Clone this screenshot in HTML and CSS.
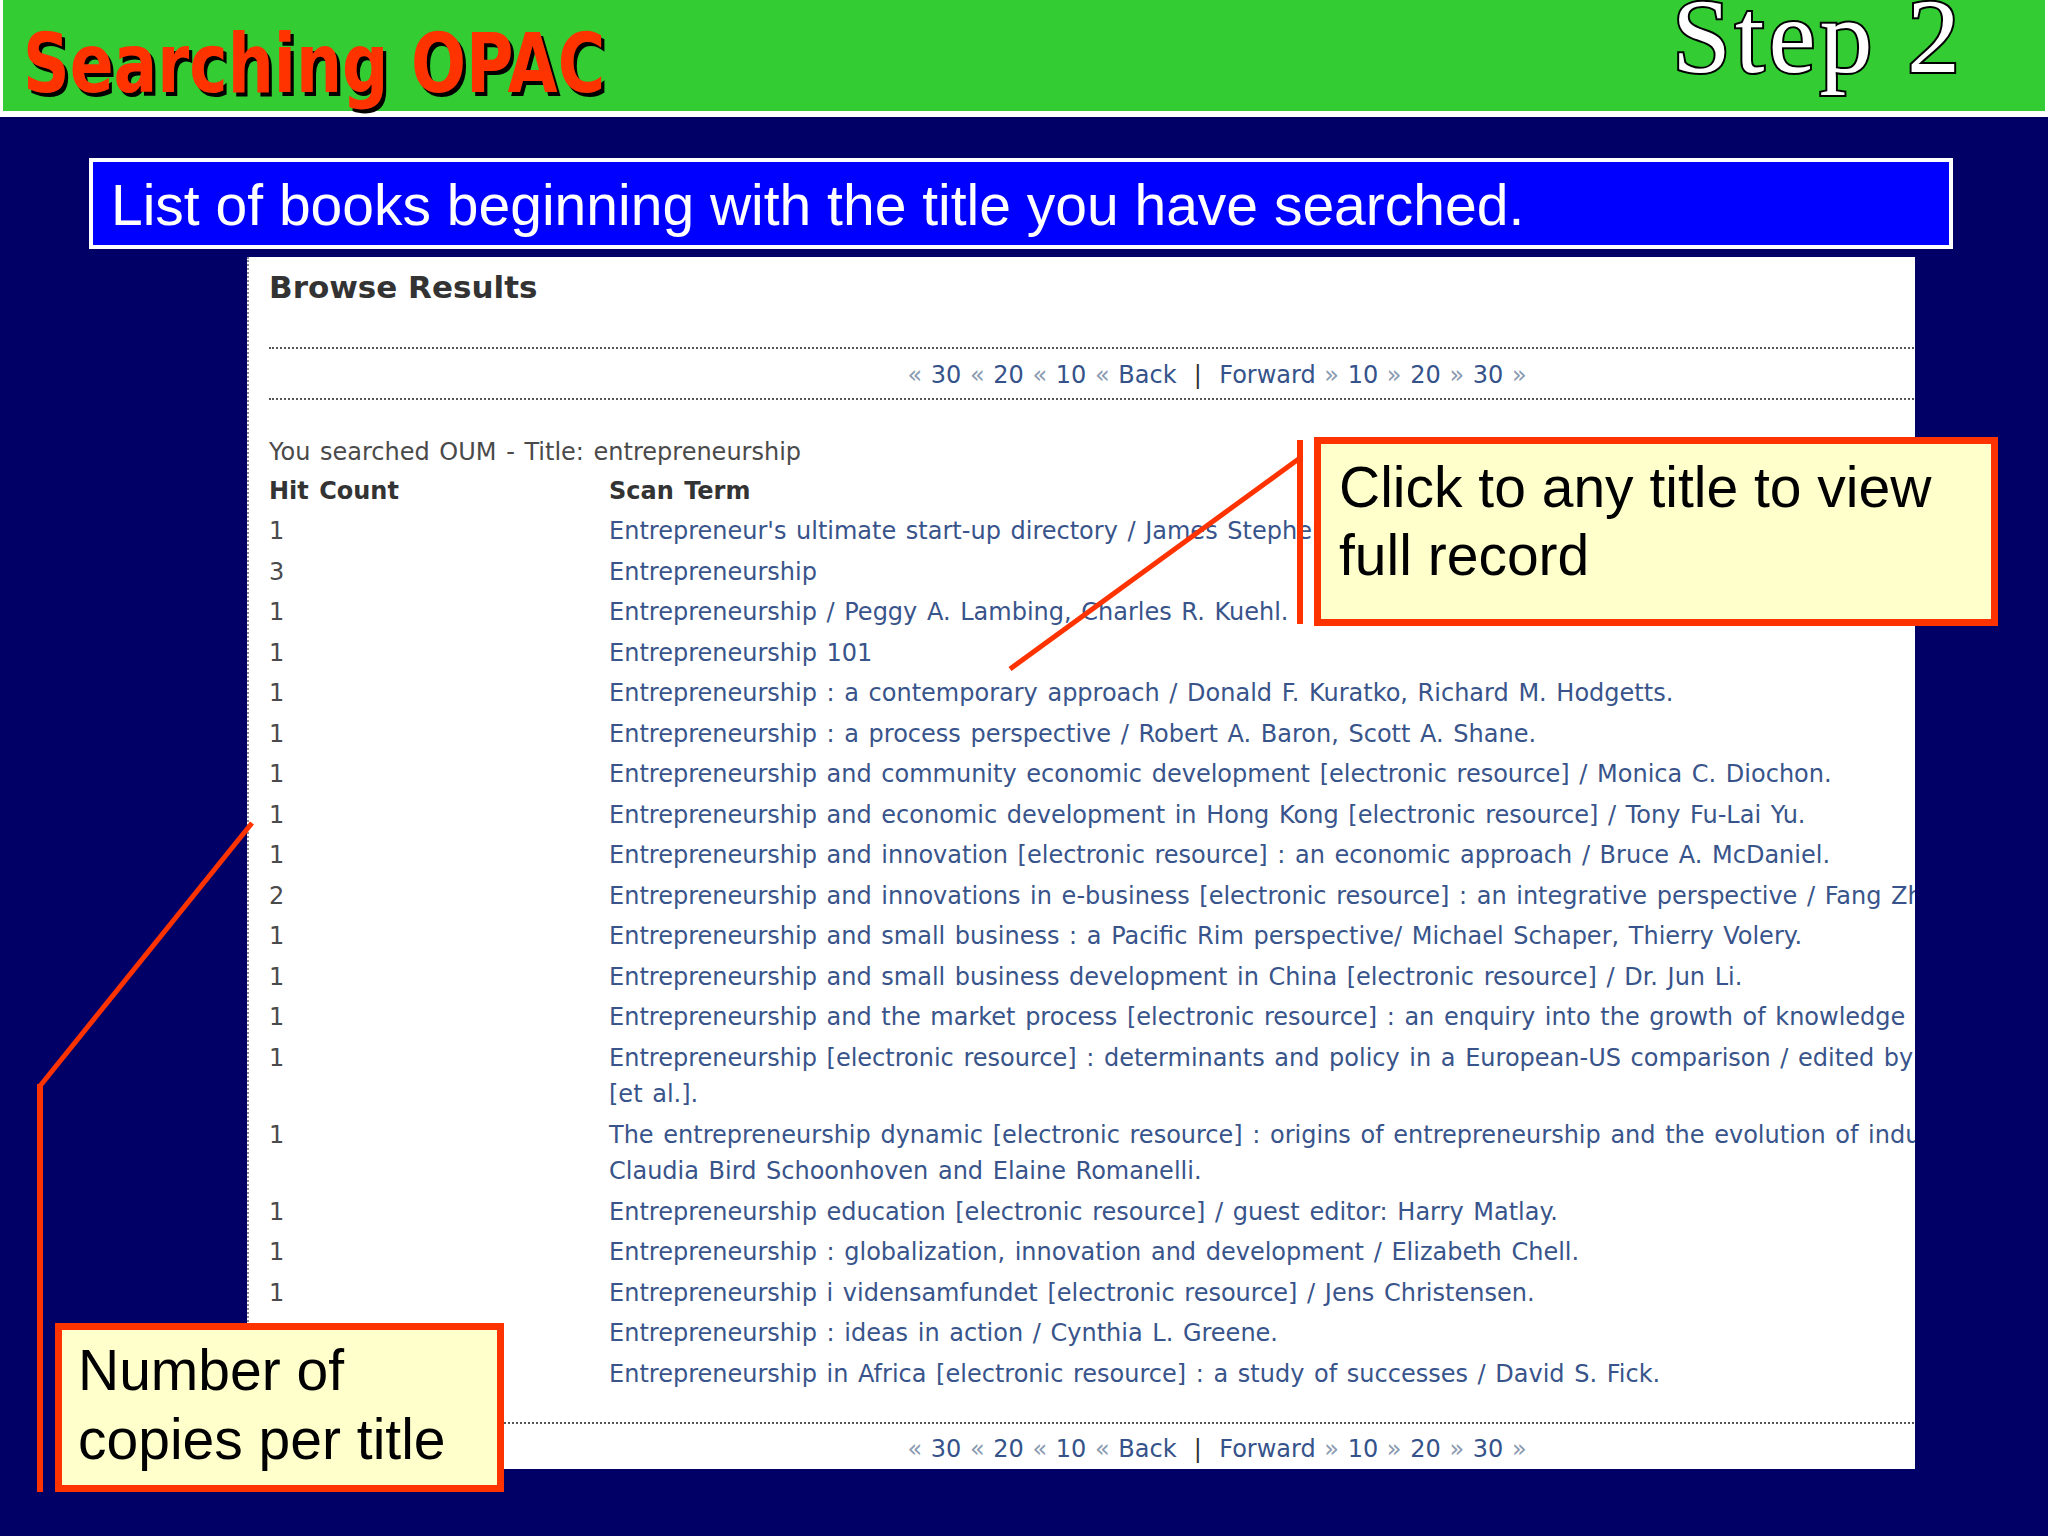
FILE: index.html
```html
<!DOCTYPE html>
<html lang="en">
<head>
<meta charset="utf-8">
<title>Searching OPAC - Step 2</title>
<link rel="stylesheet" href="styles.css">
</head>
<body>
<header class="topbar">
  <h1 class="title">Searching OPAC</h1>
  <div class="step">Step 2</div>
</header>

<div class="banner">List of books beginning with the title you have searched.</div>

<section class="panel">
  <div class="panel-inner">
    <h2 class="panel-title">Browse Results</h2>
    <div class="nav">
      <span class="ar">&laquo;</span> <a>30</a> <span class="ar">&laquo;</span> <a>20</a> <span class="ar">&laquo;</span> <a>10</a> <span class="ar">&laquo;</span> <a>Back</a>&nbsp; <span class="sep">|</span> &nbsp;<a>Forward</a> <span class="ar">&raquo;</span> <a>10</a> <span class="ar">&raquo;</span> <a>20</a> <span class="ar">&raquo;</span> <a>30</a> <span class="ar">&raquo;</span>
    </div>
    <p class="searched">You searched OUM - Title: entrepreneurship</p>
    <table class="results">
      <colgroup>
        <col class="col-hits">
        <col class="col-term">
      </colgroup>
      <thead>
        <tr><th>Hit Count</th><th>Scan Term</th></tr>
      </thead>
      <tbody>
        <tr><td>1</td><td><a>Entrepreneur's ultimate start-up directory / James Stephenson.</a></td></tr>
        <tr><td>3</td><td><a>Entrepreneurship</a></td></tr>
        <tr><td>1</td><td><a>Entrepreneurship / Peggy A. Lambing, Charles R. Kuehl.</a></td></tr>
        <tr><td>1</td><td><a>Entrepreneurship 101</a></td></tr>
        <tr><td>1</td><td><a>Entrepreneurship : a contemporary approach / Donald F. Kuratko, Richard M. Hodgetts.</a></td></tr>
        <tr><td>1</td><td><a>Entrepreneurship : a process perspective / Robert A. Baron, Scott A. Shane.</a></td></tr>
        <tr><td>1</td><td><a>Entrepreneurship and community economic development [electronic resource] / Monica C. Diochon.</a></td></tr>
        <tr><td>1</td><td><a>Entrepreneurship and economic development in Hong Kong [electronic resource] / Tony Fu-Lai Yu.</a></td></tr>
        <tr><td>1</td><td><a>Entrepreneurship and innovation [electronic resource] : an economic approach / Bruce A. McDaniel.</a></td></tr>
        <tr><td>2</td><td><a>Entrepreneurship and innovations in e-business [electronic resource] : an integrative perspective / Fang Zhao.</a></td></tr>
        <tr><td>1</td><td><a>Entrepreneurship and small business : a Pacific Rim perspective/ Michael Schaper, Thierry Volery.</a></td></tr>
        <tr><td>1</td><td><a>Entrepreneurship and small business development in China [electronic resource] / Dr. Jun Li.</a></td></tr>
        <tr><td>1</td><td><a>Entrepreneurship and the market process [electronic resource] : an enquiry into the growth of knowledge / David Harper.</a></td></tr>
        <tr><td>1</td><td><a>Entrepreneurship [electronic resource] : determinants and policy in a European-US comparison / edited by David B. Audretsch ...<br>[et al.].</a></td></tr>
        <tr><td>1</td><td><a>The entrepreneurship dynamic [electronic resource] : origins of entrepreneurship and the evolution of industries / edited by<br>Claudia Bird Schoonhoven and Elaine Romanelli.</a></td></tr>
        <tr><td>1</td><td><a>Entrepreneurship education [electronic resource] / guest editor: Harry Matlay.</a></td></tr>
        <tr><td>1</td><td><a>Entrepreneurship : globalization, innovation and development / Elizabeth Chell.</a></td></tr>
        <tr><td>1</td><td><a>Entrepreneurship i vidensamfundet [electronic resource] / Jens Christensen.</a></td></tr>
        <tr><td>1</td><td><a>Entrepreneurship : ideas in action / Cynthia L. Greene.</a></td></tr>
        <tr><td>1</td><td><a>Entrepreneurship in Africa [electronic resource] : a study of successes / David S. Fick.</a></td></tr>
      </tbody>
    </table>
    <div class="nav nav-bottom">
      <span class="ar">&laquo;</span> <a>30</a> <span class="ar">&laquo;</span> <a>20</a> <span class="ar">&laquo;</span> <a>10</a> <span class="ar">&laquo;</span> <a>Back</a>&nbsp; <span class="sep">|</span> &nbsp;<a>Forward</a> <span class="ar">&raquo;</span> <a>10</a> <span class="ar">&raquo;</span> <a>20</a> <span class="ar">&raquo;</span> <a>30</a> <span class="ar">&raquo;</span>
    </div>
  </div>
</section>

<svg class="pointers" width="2048" height="1536" viewBox="0 0 2048 1536" aria-hidden="true">
  <line x1="1300" y1="440" x2="1300" y2="624" stroke="#ff3300" stroke-width="6"/>
  <line x1="1300" y1="458" x2="1010" y2="669" stroke="#ff3300" stroke-width="5"/>
  <line x1="40" y1="1084" x2="40" y2="1492" stroke="#ff3300" stroke-width="6"/>
  <line x1="40" y1="1086" x2="252" y2="823" stroke="#ff3300" stroke-width="5"/>
</svg>

<div class="callout callout-title">Click to any title to view<br>full record</div>
<div class="callout callout-copies">Number of<br>copies per title</div>
</body>
</html>
```

FILE: styles.css
```css
* {
  box-sizing: border-box;
}

html,
body {
  margin: 0;
  padding: 0;
}

body {
  position: relative;
  width: 2048px;
  height: 1536px;
  overflow: hidden;
  background: #000066;
  font-family: "DejaVu Sans", sans-serif;
}

/* ---------- top green bar ---------- */
.topbar {
  height: 117px;
  background: #33cc33;
  border-style: solid;
  border-color: #ffffff;
  border-width: 0 3px 6px 3px;
  display: flex;
  justify-content: space-between;
  align-items: flex-start;
}

.title {
  margin: 23px 0 0 20px;
  font-family: "DejaVu Sans", sans-serif;
  font-weight: bold;
  font-size: 82px;
  line-height: 82px;
  color: #ff3300;
  text-shadow: 4px 4px 0 #000000;
  white-space: nowrap;
  transform: scaleX(0.79);
  transform-origin: left top;
}

.step {
  margin: -16px 81px 0 0;
  font-family: "Liberation Serif", "Times New Roman", serif;
  font-size: 106px;
  line-height: 106px;
  letter-spacing: 4px;
  color: #ffffff;
  -webkit-text-stroke: 4px #000000;
  paint-order: stroke fill;
  white-space: nowrap;
}

/* ---------- blue banner ---------- */
.banner {
  margin: 41px 0 0 89px;
  width: 1864px;
  height: 91px;
  background: #0000ff;
  border: 4px solid #ffffff;
  padding: 3px 0 0 18px;
  color: #ffffff;
  font-family: "Liberation Sans", Arial, sans-serif;
  font-size: 57px;
  line-height: 80px;
  white-space: nowrap;
}

/* ---------- browse results panel ---------- */
.panel {
  margin: 8px 0 0 247px;
  width: 1668px;
  height: 1212px;
  background: #ffffff;
  border-left: 2px dotted #8a8a9a;
  overflow: hidden;
  padding: 12px 0 0 20px;
}

.panel-inner {
  width: 1896px;
}

.panel-title {
  margin: 0;
  font-family: "DejaVu Sans", sans-serif;
  font-weight: bold;
  font-size: 31px;
  line-height: 36px;
  color: #333333;
}

.nav {
  margin-top: 42px;
  border-top: 2px dotted #555555;
  border-bottom: 2px dotted #555555;
  padding: 8px 0 5px;
  text-align: center;
  font-size: 24px;
  line-height: 36px;
  word-spacing: 1px;
  color: #35538a;
  white-space: nowrap;
}

.nav .ar {
  color: #8a9ab0;
}

.nav .sep {
  color: #333333;
}

.nav-bottom {
  margin-top: 28px;
  border-bottom: none;
  padding-top: 7px;
}

.searched {
  margin: 34px 0 0;
  font-size: 24px;
  line-height: 36.5px;
  word-spacing: 2px;
  color: #4a4a4a;
  white-space: nowrap;
}

.results {
  table-layout: fixed;
  width: 1896px;
  border-collapse: collapse;
  border-spacing: 0;
  font-size: 24px;
  line-height: 36.5px;
  word-spacing: 2px;
  white-space: nowrap;
}

.col-hits {
  width: 340px;
}

.results th,
.results td {
  padding: 2px 0;
  text-align: left;
  vertical-align: top;
  overflow: visible;
}

.results th {
  font-weight: bold;
  color: #333333;
}

.results td {
  color: #4a4a4a;
}

.results a {
  color: #38548a;
}

/* ---------- overlays ---------- */
.pointers {
  position: absolute;
  left: 0;
  top: 0;
}

.callout {
  position: absolute;
  background: #ffffcc;
  border: 7px solid #ff3300;
  font-family: "Liberation Sans", Arial, sans-serif;
  font-size: 57px;
  line-height: 68px;
  color: #000000;
  white-space: nowrap;
}

.callout-title {
  left: 1314px;
  top: 437px;
  width: 684px;
  height: 189px;
  padding: 9px 0 0 18px;
}

.callout-copies {
  left: 55px;
  top: 1323px;
  width: 449px;
  height: 169px;
  padding: 6px 0 0 16px;
  line-height: 69px;
}
```
